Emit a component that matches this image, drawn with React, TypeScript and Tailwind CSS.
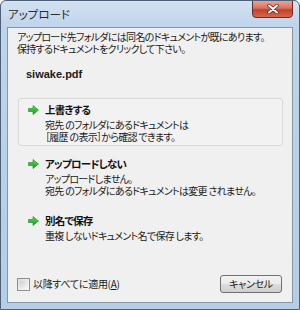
import React from "react";

const Arrow = () => (
  <svg width="11" height="10" viewBox="0 0 11 10" className="block">
    <defs>
      <linearGradient id="ga" x1="0" y1="0" x2="0" y2="1">
        <stop offset="0" stopColor="#5fe05f" />
        <stop offset="1" stopColor="#139a13" />
      </linearGradient>
    </defs>
    <path d="M0.5 3.5 H5 V0.5 L10.5 5 L5 9.5 V6.5 H0.5 Z" fill="url(#ga)" stroke="#1a8a1a" strokeWidth="0.6" strokeLinejoin="round" />
  </svg>
);

type Opt = { title: string; lines: string[]; active?: boolean; mt: string };

const options: Opt[] = [
  { title: "上書きする", lines: ["宛先 のフォルダにあるドキュメントは", "［履歴 の表示］から確認 できます。"], active: true, mt: "mt-0" },
  { title: "アップロードしない", lines: ["アップロードしません。", "宛先 のフォルダにあるドキュメントは変更 されません。"], mt: "mt-[6px]" },
  { title: "別名で保存", lines: ["重複 しないドキュメント名で保存 します。"], mt: "mt-[9px]" },
];

export default function App() {
  const font = "[font-family:'Noto_Sans_CJK_JP',sans-serif] [font-feature-settings:'palt'] whitespace-nowrap";
  return (
    <div className={`w-[300px] h-[310px] relative overflow-hidden rounded-t-[6px] border border-[#4d6078] bg-[linear-gradient(180deg,#d3e2f2_0px,#bfd4ea_26px,#b6cde6_100%)] ${font}`}>
      <div className="h-[26px] flex items-center pl-[7px] pt-[1px] text-[11.5px] text-[#2a2a2a]">アップロード</div>
      <div className="absolute top-[-1px] right-[6px] w-[41px] h-[18px] rounded-b-[4px] border border-[#6d2a22] bg-[linear-gradient(180deg,#eba493_0%,#d7715e_45%,#c2402c_55%,#d9684c_100%)] flex items-center justify-center">
        <svg width="12" height="10" viewBox="0 0 12 10">
          <path d="M2 1.5 L10 8.5 M10 1.5 L2 8.5" stroke="#5a2018" strokeWidth="3.4" strokeLinecap="round" />
          <path d="M2 1.5 L10 8.5 M10 1.5 L2 8.5" stroke="#ffffff" strokeWidth="2" strokeLinecap="round" />
        </svg>
      </div>
      <div className="ml-[6px] w-[286px] h-[276px] border border-[#8596ab] bg-[#f0f0f0] flex flex-col pl-[9px] pr-[9px] text-[10px] tracking-[-0.7px] text-[#1a1a1a]">
        <div className="pt-[3px] leading-[12px]">
          <div>アップロード先フォルダには同名のドキュメントが既にあります。</div>
          <div>保持するドキュメントをクリックして下さい。</div>
        </div>
        <div className="mt-[13px] pl-[9px] leading-[12px] font-bold [font-family:'Liberation_Sans',sans-serif] text-[11px] tracking-normal">siwake.pdf</div>
        <div className="mt-[18px] ml-[1px] w-[265px] flex flex-col">
          {options.map((o) => (
            <div
              key={o.title}
              className={`${o.mt} rounded-[3px] border pt-[5px] pb-[2px] pl-[9px] flex ${o.active ? "border-[#d9d9d9] bg-[#f2f2f2]" : "border-transparent"}`}
            >
              <div className="w-[11px] mr-[6px] pt-[1px]">
                <Arrow />
              </div>
              <div className="flex flex-col">
                <div className="leading-[12px] font-bold text-[10.5px] tracking-[-0.8px] text-[#111]">{o.title}</div>
                <div className="mt-[3px] leading-[12px]">
                  {o.lines.map((l) => (
                    <div key={l}>{l}</div>
                  ))}
                </div>
              </div>
            </div>
          ))}
        </div>
        <div className="mt-auto pb-[9px] flex items-center justify-between">
          <div className="flex items-center">
            <div className="w-[13px] h-[13px] border border-[#8e8f8f] bg-[linear-gradient(135deg,#dcdcdc,#fbfbfb)] p-[2px]">
              <div className="w-full h-full bg-[linear-gradient(135deg,#cbcfd5,#f6f6f6)]" />
            </div>
            <span className="ml-[3px] leading-[12px] tracking-[-0.3px]">以降すべてに適用(<span className="underline">A</span>)</span>
          </div>
          <div className="mr-[1px] w-[62px] h-[18px] rounded-[3px] border border-[#707070] bg-[linear-gradient(180deg,#f2f2f2_0%,#ebebeb_50%,#dddddd_51%,#cfcfcf_100%)] flex items-center justify-center leading-[12px] tracking-[-0.3px]">
            キャンセル
          </div>
        </div>
      </div>
    </div>
  );
}
